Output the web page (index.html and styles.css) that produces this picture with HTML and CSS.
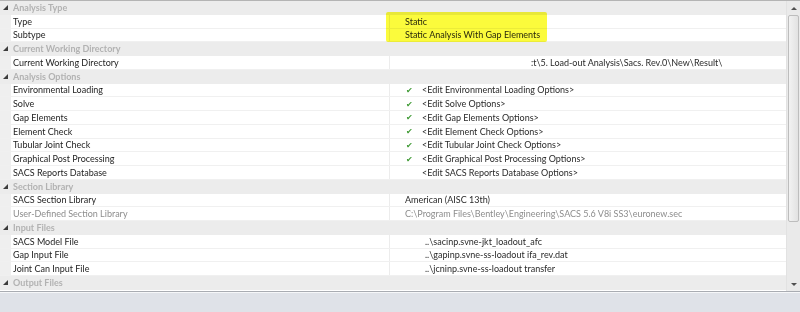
FILE: index.html
```html
<!DOCTYPE html>
<html lang="en">
<head>
    <meta charset="UTF-8">
    <title>Analysis Options</title>
    <link rel="stylesheet" href="styles.css">
</head>
<body>
    <div class="window">
        <div class="grid-wrap">
            <div class="grid">
                <!-- Analysis Type -->
                <div class="row cat"><span class="gutter"><span class="tri"></span></span><span class="name">Analysis Type</span></div>
                <div class="row"><span class="gutter"></span><span class="name">Type</span><span class="value">Static</span></div>
                <div class="row"><span class="gutter"></span><span class="name">Subtype</span><span class="value">Static Analysis With Gap Elements</span></div>

                <!-- Current Working Directory -->
                <div class="row cat"><span class="gutter"><span class="tri"></span></span><span class="name">Current Working Directory</span></div>
                <div class="row"><span class="gutter"></span><span class="name">Current Working Directory</span><span class="value path">:t\5. Load-out Analysis\Sacs. Rev.0\New\Result\</span></div>

                <!-- Analysis Options -->
                <div class="row cat"><span class="gutter"><span class="tri"></span></span><span class="name">Analysis Options</span></div>
                <div class="row"><span class="gutter"></span><span class="name">Environmental Loading</span><span class="value"><span class="chk">&#10004;</span>&lt;Edit Environmental Loading Options&gt;</span></div>
                <div class="row"><span class="gutter"></span><span class="name">Solve</span><span class="value"><span class="chk">&#10004;</span>&lt;Edit Solve Options&gt;</span></div>
                <div class="row"><span class="gutter"></span><span class="name">Gap Elements</span><span class="value"><span class="chk">&#10004;</span>&lt;Edit Gap Elements Options&gt;</span></div>
                <div class="row"><span class="gutter"></span><span class="name">Element Check</span><span class="value"><span class="chk">&#10004;</span>&lt;Edit Element Check Options&gt;</span></div>
                <div class="row"><span class="gutter"></span><span class="name">Tubular Joint Check</span><span class="value"><span class="chk">&#10004;</span>&lt;Edit Tubular Joint Check Options&gt;</span></div>
                <div class="row"><span class="gutter"></span><span class="name">Graphical Post Processing</span><span class="value"><span class="chk">&#10004;</span>&lt;Edit Graphical Post Processing Options&gt;</span></div>
                <div class="row"><span class="gutter"></span><span class="name">SACS Reports Database</span><span class="value"><span class="chk off"></span>&lt;Edit SACS Reports Database Options&gt;</span></div>

                <!-- Section Library -->
                <div class="row cat"><span class="gutter"><span class="tri"></span></span><span class="name">Section Library</span></div>
                <div class="row"><span class="gutter"></span><span class="name">SACS Section Library</span><span class="value">American (AISC 13th)</span></div>
                <div class="row disabled"><span class="gutter"></span><span class="name">User-Defined Section Library</span><span class="value">C:\Program Files\Bentley\Engineering\SACS 5.6 V8i SS3\euronew.sec</span></div>

                <!-- Input Files -->
                <div class="row cat"><span class="gutter"><span class="tri"></span></span><span class="name">Input Files</span></div>
                <div class="row"><span class="gutter"></span><span class="name">SACS Model File</span><span class="value file">..\sacinp.svne-jkt_loadout_afc</span></div>
                <div class="row"><span class="gutter"></span><span class="name">Gap Input File</span><span class="value file">..\gapinp.svne-ss-loadout ifa_rev.dat</span></div>
                <div class="row"><span class="gutter"></span><span class="name">Joint Can Input File</span><span class="value file">..\jcninp.svne-ss-loadout transfer</span></div>

                <!-- Output Files -->
                <div class="row cat"><span class="gutter"><span class="tri"></span></span><span class="name">Output Files</span></div>
            </div>

            <div class="scrollbar">
                <div class="arrow up"></div>
                <div class="thumb"></div>
                <div class="track"></div>
                <div class="arrow down"></div>
            </div>
        </div>
        <div class="statusbar"></div>

        <!-- marker highlight over the analysis type values -->
        <div class="highlight"></div>
    </div>
</body>
</html>
```

FILE: styles.css
```css
body {
    margin: 0;
    font-family: Lato, "Liberation Sans", sans-serif;
    font-size: 9px;
    color: #1e1e1e;
    background: #ffffff;
}

.window {
    position: relative;
    width: 800px;
    height: 312px;
    overflow: hidden;
}

.grid-wrap {
    display: flex;
    height: 292px;
    border-top: 1px solid #b4b4b4;
    border-bottom: 1px solid #a9acb2;
    box-sizing: border-box;
}

.grid {
    flex: 1;
}

.row {
    display: flex;
    align-items: center;
    height: 13.75px;
    box-sizing: border-box;
    border-bottom: 1px solid #f0f0f0;
    white-space: nowrap;
}

.gutter {
    width: 11px;
    height: 100%;
    flex: none;
    display: flex;
    align-items: center;
    justify-content: center;
    background: #efefef;
}

.name {
    width: 376px;
    flex: none;
    padding-left: 2px;
    height: 100%;
    display: flex;
    align-items: center;
    border-right: 1px solid #ececec;
    overflow: hidden;
}

.value {
    flex: 1;
    padding-left: 15px;
    display: flex;
    align-items: center;
    color: #2a2a2a;
}

.value.path {
    padding-left: 141px;
}

.value.file {
    padding-left: 35px;
}

.chk {
    width: 16px;
    margin-left: 1px;
    color: #3f9a34;
    font-size: 8px;
}

.row.cat {
    background: #ececec;
    border-bottom-color: #ececec;
}

.row.cat .gutter {
    background: #ececec;
}

.row.cat .name {
    border-right: none;
    color: #b2b2b2;
    font-weight: 700;
}

.tri {
    width: 0;
    height: 0;
    border-left: 5px solid transparent;
    border-bottom: 5px solid #3c3c3c;
}

.row.disabled .name,
.row.disabled .value {
    color: #8d8d8d;
}

.scrollbar {
    width: 13px;
    display: flex;
    flex-direction: column;
    background: #eaeaea;
    border-left: 1px solid #e2e2e2;
}

.arrow {
    height: 14px;
    display: flex;
    align-items: center;
    justify-content: center;
}

.arrow::after {
    content: "";
    border-left: 3px solid transparent;
    border-right: 3px solid transparent;
}

.arrow.up::after {
    border-bottom: 3px solid #505050;
}

.arrow.down::after {
    border-top: 3px solid #505050;
}

.thumb {
    height: 205px;
    margin: 0 1px;
    background: linear-gradient(to right, #f2f2f2, #e2e2e2);
    border: 1px solid #bdbdbd;
    border-radius: 2px;
}

.track {
    flex: 1;
}

.statusbar {
    height: 20px;
    background: #dfe2e8;
    border-top: 1px solid #f6f7f9;
}

.highlight {
    position: absolute;
    left: 386px;
    top: 12px;
    width: 161px;
    height: 30px;
    background: #fbfb3c;
    mix-blend-mode: multiply;
    border-radius: 2px;
}
```
